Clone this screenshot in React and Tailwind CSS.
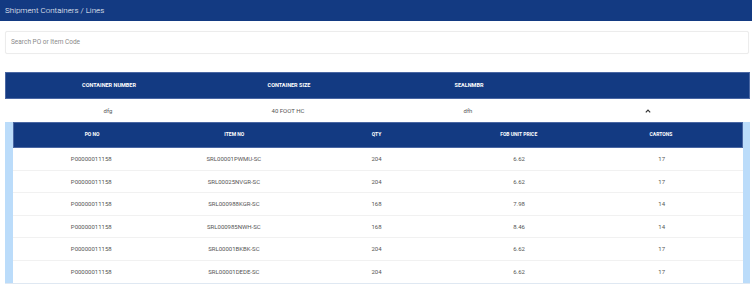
import React from "react";

const lines = [
  { po: "P00000011158", item: "SRL00001PWMU-SC", qty: 204, price: "6.62", cartons: 17 },
  { po: "P00000011158", item: "SRL00025NVGR-SC", qty: 204, price: "6.62", cartons: 17 },
  { po: "P00000011158", item: "SRL000988KGR-SC", qty: 168, price: "7.98", cartons: 14 },
  { po: "P00000011158", item: "SRL000985NWH-SC", qty: 168, price: "8.46", cartons: 14 },
  { po: "P00000011158", item: "SRL00001BKBK-SC", qty: 204, price: "6.62", cartons: 17 },
  { po: "P00000011158", item: "SRL00001DEDE-SC", qty: 204, price: "6.62", cartons: 17 },
];

export default function App() {
  return (
    <div className="w-[752px] h-[286px] bg-white overflow-hidden font-['Roboto','Liberation_Sans',sans-serif]">
      <div className="h-[21px] bg-[#133a82] flex items-center px-[5px] text-[8px] font-light text-white">
        Shipment Containers / Lines
      </div>

      <div className="px-[5px] pt-[10px]">
        <div className="h-[23px] w-[744px] border border-[#ececec] rounded-[2px] bg-white flex items-center px-[5px] text-[6.5px] text-[#8a8a8a] shadow-[0_0_1px_rgba(0,0,0,0.05)]">
          Search PO or Item Code
        </div>
      </div>

      <div className="mt-[18px] ml-[5px] w-[745px]">
        <div className="h-[27px] bg-[#133a82] border border-[#4a67a3] grid grid-cols-[180px_180px_180px_180px] pl-[13px] items-center text-[5.5px] font-bold text-white text-center">
          <div>CONTAINER NUMBER</div>
          <div>CONTAINER SIZE</div>
          <div>SEALNMBR</div>
          <div></div>
        </div>
        <div className="h-[23px] grid grid-cols-[180px_180px_180px_180px] pl-[13px] items-center text-[6px] text-[#555] text-center">
          <div>dfg</div>
          <div>40 FOOT HC</div>
          <div>dfh</div>
          <div className="flex justify-center">
            <svg width="6" height="4" viewBox="0 0 6 4">
              <path d="M0.8 3.3 L3 1.1 L5.2 3.3" fill="none" stroke="#333" strokeWidth="1.2" />
            </svg>
          </div>
        </div>

        <div className="bg-[#bbdcfa] pl-[8px] pr-[7px] border-b border-[#dfe8f2]">
          <div className="h-[26px] bg-[#133a82] border border-[#4a67a3] grid grid-cols-5 pl-[7px] pr-[10px] items-center text-[5px] font-bold text-white text-center">
            <div>PO NO</div>
            <div>ITEM NO</div>
            <div>QTY</div>
            <div>FOB UNIT PRICE</div>
            <div>CARTONS</div>
          </div>
          {lines.map((l, i) => (
            <div
              key={i}
              className={`h-[22.5px] bg-white grid grid-cols-5 pl-[7px] pr-[10px] items-center text-[6px] text-[#555] text-center ${i < lines.length - 1 ? "border-b border-[#f1f1f1]" : ""}`}
            >
              <div>{l.po}</div>
              <div>{l.item}</div>
              <div>{l.qty}</div>
              <div>{l.price}</div>
              <div>{l.cartons}</div>
            </div>
          ))}
        </div>
      </div>
    </div>
  );
}
